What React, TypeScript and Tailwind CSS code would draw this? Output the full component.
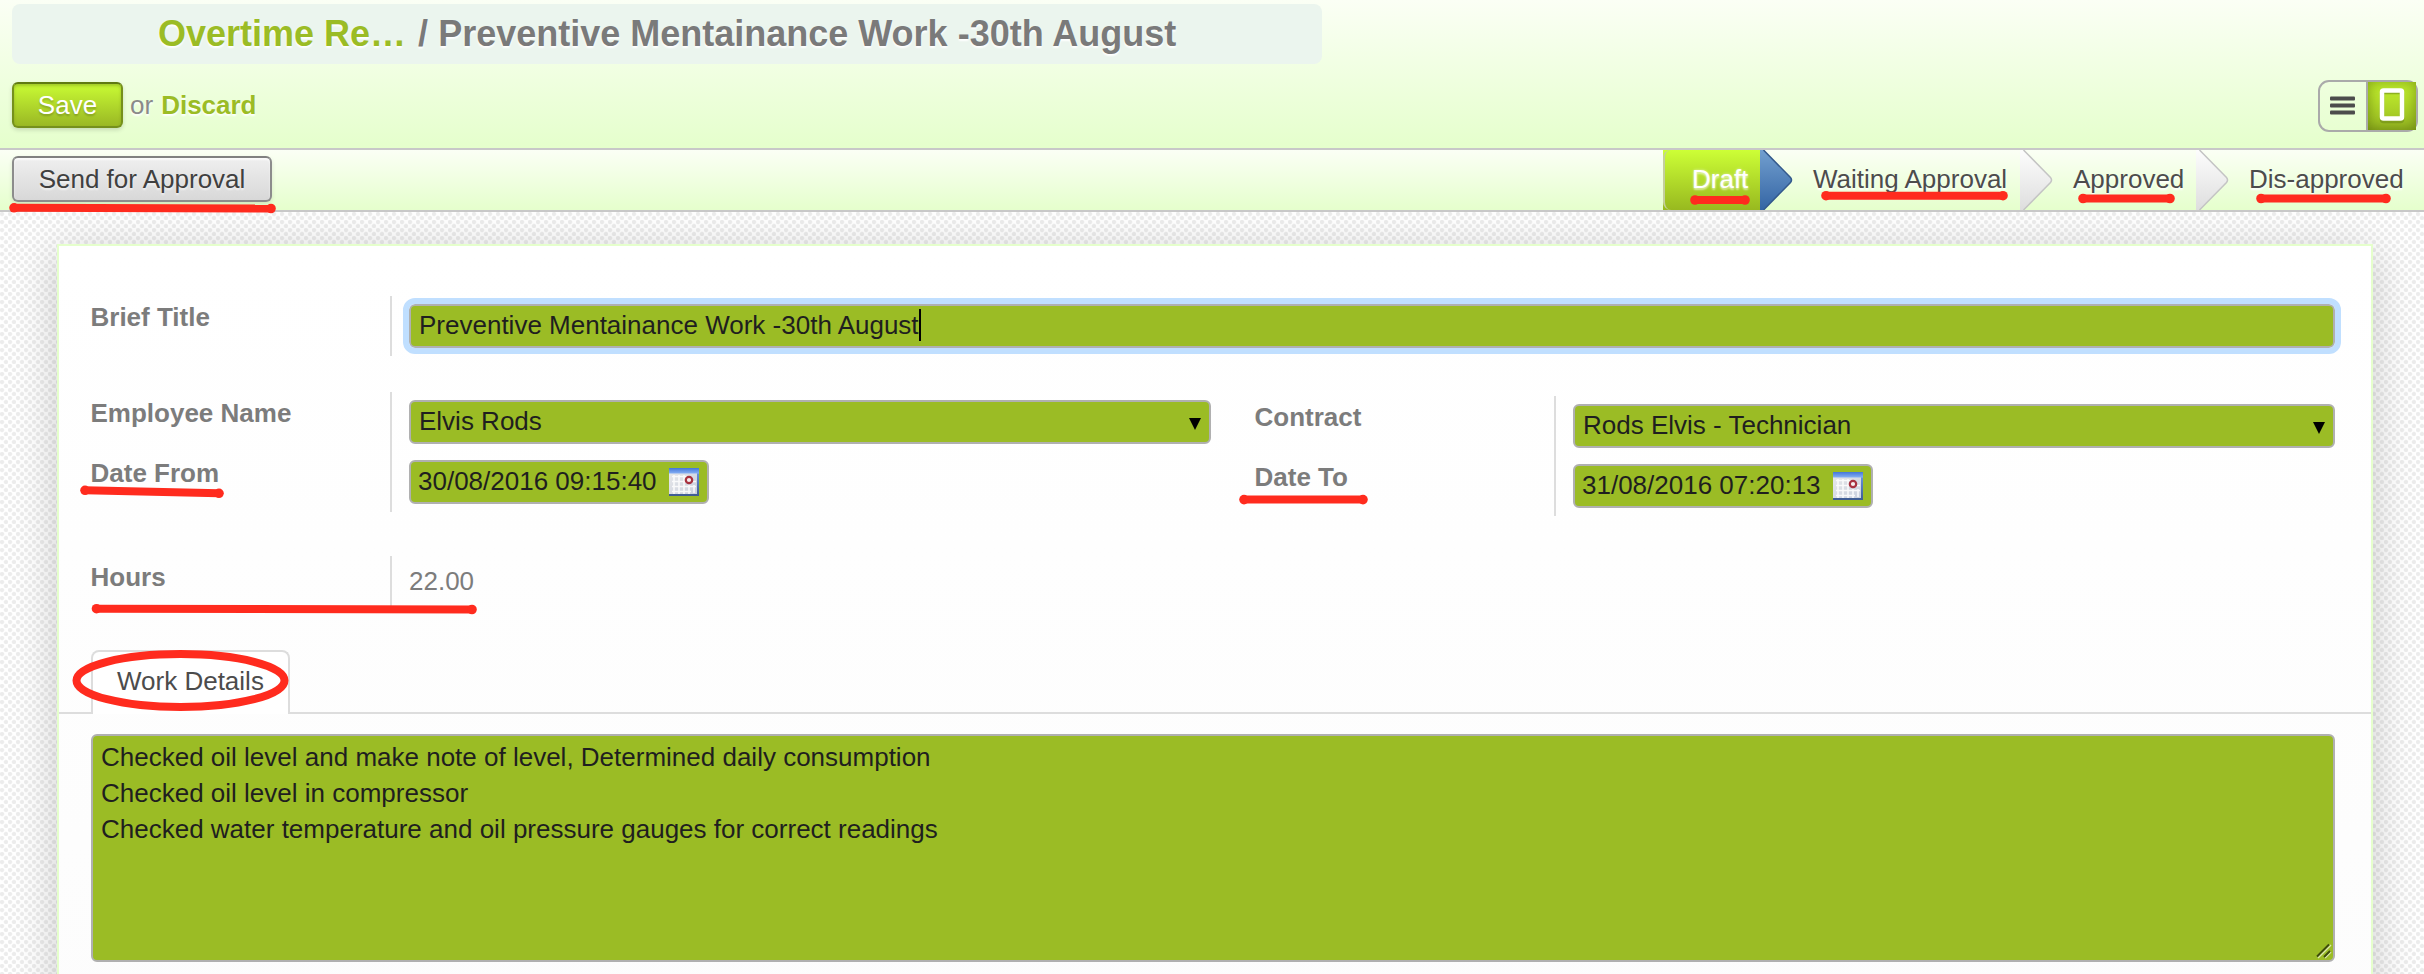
import type { ReactNode } from "react";

const INPUT =
  "flex h-11 items-center rounded-[6px] border-2 border-[#b0b0b0] bg-[#9bbc25] text-[#1f1f1f]";

function Stage({ label, active, last, className }: { label: string; active?: boolean; last?: boolean; className: string }) {
  return (
    <div className="flex h-[60px]">
      <div
        className={
          "flex items-center whitespace-nowrap pb-[2px] text-[26px] " +
          (active
            ? "rounded-none bg-linear-to-b from-[#cdff36] to-[#98b91f] text-white [text-shadow:0_2px_2px_rgba(255,255,255,0.5),0_0_3px_rgba(255,255,255,0.6)] "
            : "text-[#4c4c4c] [text-shadow:0_2px_2px_#fff] ") +
          className
        }
      >
        {label}
      </div>
      {!last && (
        <svg width="33" height="60" viewBox="0 0 33 60" className="shrink-0">
          <defs>
            <linearGradient id={active ? "arrowBlue" : "arrowGray"} x1="0" y1="0" x2="0" y2="1">
              <stop offset="0" stopColor={active ? "#729fcf" : "#fdfdfd"} />
              <stop offset="1" stopColor={active ? "#3465a4" : "#dedede"} />
            </linearGradient>
          </defs>
          <path
            d="M0 0H3.500L30.500 27.500Q32.500 30 30.500 32.500L3.500 60H0Z"
            fill={active ? "url(#arrowBlue)" : "url(#arrowGray)"}
          />
          <path
            d="M3.500 0L30.500 27.500Q32.500 30 30.500 32.500L3.500 60"
            fill="none"
            stroke={active ? "#34598c" : "#c4c4c4"}
            strokeWidth="1.500"
          />
        </svg>
      )}
    </div>
  );
}

function Group({ labels, height, children }: { labels: string[]; height: string; children: ReactNode }) {
  return (
    <div className={"flex " + height}>
      <div className="flex w-[299px] shrink-0 flex-col">
        {labels.map((l) => (
          <div key={l} className="-ml-[0.5px] h-[60px] pt-[3px] text-[26px] leading-9 font-bold text-[#7c7c7c]">
            {l}
          </div>
        ))}
      </div>
      <div className="w-[2px] shrink-0 bg-[#dddddd]" />
      <div className="flex min-w-0 grow flex-col gap-4 pt-2 pl-[17px]">{children}</div>
    </div>
  );
}

function Select({ value }: { value: string }) {
  return (
    <div className={INPUT + " justify-between pr-2 pl-2"}>
      <span className="pb-[2px]">{value}</span>
      <svg width="12" height="12" viewBox="0 0 12 12" className="mt-1">
        <path d="M0 0H12L6 12Z" fill="#000" />
      </svg>
    </div>
  );
}

function CalendarIcon() {
  return (
    <svg width="30" height="28" viewBox="0 0 30 28">
      <defs>
        <linearGradient id="calHead" x1="0" y1="0" x2="0" y2="1">
          <stop offset="0" stopColor="#4476d8" />
          <stop offset="1" stopColor="#86b0f5" />
        </linearGradient>
        <linearGradient id="calEdge" x1="0" y1="0" x2="0" y2="1">
          <stop offset="0" stopColor="#6f9bea" />
          <stop offset="1" stopColor="#3f5c92" />
        </linearGradient>
        <linearGradient id="calPage" x1="0" y1="0" x2="1" y2="1">
          <stop offset="0" stopColor="#e9e9ea" />
          <stop offset="1" stopColor="#c9d0de" />
        </linearGradient>
      </defs>
      <rect width="30" height="28" fill="url(#calEdge)" />
      <rect x="0" y="0" width="28" height="26" fill="url(#calPage)" />
      <rect width="30" height="5.500" fill="url(#calHead)" />
      <path d="M3 8.500H18M3 13.500H27M3 18.500H27M3 23.500H22M5 7V26M10 7V26M15 7V26M20 17V26M25 17V25" stroke="#fff" strokeWidth="1.600" opacity=".85" />
      <circle cx="20" cy="12" r="3.200" fill="#f6eeee" stroke="#a83240" strokeWidth="2.200" />
    </svg>
  );
}

function DateField({ value }: { value: string }) {
  return (
    <div className={INPUT + " w-[300px] justify-between pr-2 pl-[7px]"}>
      <span className="pb-[2px]">{value}</span>
      <CalendarIcon />
    </div>
  );
}

function Mark({ x1, y1, x2, y2 }: { x1: number; y1: number; x2: number; y2: number }) {
  return (
    <g>
      <line x1={x1 + 5} y1={y1} x2={x2 - 5} y2={y2} stroke="#ff2b1e" strokeWidth="8" />
      <circle cx={x1 + 5} cy={y1} r="4.800" />
      <circle cx={x2 - 5} cy={y2} r="4.800" />
    </g>
  );
}

function Annotations() {
  return (
    <svg className="pointer-events-none absolute top-0 left-0 z-20" width="2424" height="974" fill="#ff2b1e">
      <Mark x1={9} y1={207.800} x2={276} y2={208.500} />
      <Mark x1={1690} y1={200} x2={1750} y2={200} />
      <Mark x1={1821} y1={195.700} x2={2008} y2={195.700} />
      <Mark x1={2078} y1={198.500} x2={2175} y2={198.500} />
      <Mark x1={2256} y1={198.500} x2={2391} y2={198.500} />
      <Mark x1={80} y1={490.300} x2={224} y2={493.300} />
      <Mark x1={1239} y1={499.600} x2={1368} y2={499.600} />
      <Mark x1={91.500} y1={608.700} x2={477} y2={609.500} />
      <ellipse cx="180.500" cy="680.500" rx="104" ry="26.500" fill="none" stroke="#ff2b1e" strokeWidth="8" />
    </svg>
  );
}

export default function App() {
  return (
    <div className="relative flex h-[974px] w-[2424px] flex-col overflow-hidden bg-white font-['Liberation_Sans',Arial,sans-serif] text-[26px] leading-9">
      <header className="z-10 flex h-[150px] shrink-0 flex-col border-b-2 border-[#c8c8c8] bg-linear-to-b from-[#fbfff5] to-[#e5ffcc] pt-1">
        <h1 className="ml-3 h-[60px] w-[1310px] rounded-[8px] bg-[#ebf5ee] pl-[146px] text-[36px] leading-[59px] font-bold whitespace-nowrap text-[#7a7a7a] [text-shadow:0_2px_2px_#fff]">
          <span className="mr-[2px] text-[#9bbc25]">Overtime Re…</span>
          <span> / </span>
          <span>Preventive Mentainance Work -30th August</span>
        </h1>
        <div className="flex items-start justify-between pr-[6px] pl-3">
          <div className="mt-[18px] flex items-center">
            <button className="h-[46px] w-[111px] rounded-[6px] border-2 border-[#75901c] border-t-[#607a12] bg-linear-to-b from-[#c9fb34] to-[#9ab824] pb-px text-white shadow-[0_2px_4px_rgba(0,0,0,0.15),inset_0_2px_3px_rgba(90,110,20,0.35)] [text-shadow:0_2px_2px_rgba(0,0,0,0.2)]">
              Save
            </button>
            <span className="ml-[7px] text-[#8a8a8a] [text-shadow:0_2px_2px_#fff]">or</span>
            <span className="ml-2 font-bold text-[#9bbc25] [text-shadow:0_2px_2px_#fff]">Discard</span>
          </div>
          <div className="mt-4 flex h-[52px] w-[100px] rounded-[11px] border-2 border-[#aaaaaa]">
            <div className="flex w-12 items-center justify-center border-r-2 border-[#aaaaaa]">
              <svg width="26" height="20" viewBox="0 0 26 20" fill="#4c4c4c">
                <rect x="0" y="0.500" width="25" height="4" rx="1" />
                <rect x="0" y="7.500" width="25" height="4" rx="1" />
                <rect x="0" y="14.500" width="25" height="4" rx="1" />
              </svg>
            </div>
            <div className="flex w-12 items-center justify-center bg-linear-to-b from-[#c6f52f] to-[#98b922] shadow-[inset_0_0_14px_rgba(70,90,0,0.55)]">
              <svg width="30" height="36" viewBox="0 0 30 36" fill="none" className="-ml-px">
                <rect x="5" y="4" width="20" height="29" rx="1.500" stroke="#6c8618" strokeWidth="4.500" opacity=".55" />
                <rect x="5" y="2.500" width="20" height="28" rx="1.500" stroke="#fff" strokeWidth="4.500" />
              </svg>
            </div>
          </div>
        </div>
      </header>

      <div className="z-10 flex h-[62px] shrink-0 justify-between border-b-2 border-[#c8c8c8] bg-linear-to-b from-[#fbfff5] to-[#e5ffcc]">
        <button className="mt-[6px] ml-3 h-[46px] w-[260px] rounded-[6px] border-2 border-[#8c8c8c] border-t-[#808080] bg-linear-to-b from-[#efefef] to-[#d8d8d8] pb-px text-[#404040] shadow-[0_2px_4px_rgba(0,0,0,0.1),inset_0_2px_2px_rgba(255,255,255,0.7)] [text-shadow:0_2px_2px_rgba(255,255,255,0.6)]">
          Send for Approval
        </button>
        <div className="flex">
          <div className="relative flex">
            <Stage label="Draft" active className="w-[97px] pl-[29px]" />
            <div className="absolute inset-y-0 left-0 w-[8px] rounded-l-[8px] border-l-2 border-[#c4cf9c]" />
          </div>
          <Stage label="Waiting Approval" className="w-[227px] pl-[20px]" />
          <Stage label="Approved" className="w-[143px] pl-[20px]" />
          <Stage label="Dis-approved" last className="w-[195px] pl-[20px]" />
        </div>
      </div>

      <main className="flex min-h-0 grow bg-white bg-[radial-gradient(circle_at_2px_2px,#ececec_1.500px,transparent_2.800px),radial-gradient(circle_at_6px_6px,#ececec_1.500px,transparent_2.800px)] bg-[length:8px_8px] pt-8 pl-[57px]">
        <section className="flex h-[900px] w-[2316px] shrink-0 flex-col border-2 border-[#e5ffcc] bg-linear-to-b from-white to-[#fcfcfc] shadow-[0_8px_40px_rgba(0,0,0,0.2)]">
          <div className="flex flex-col pt-[50px] pr-9 pl-8">
            <Group labels={["Brief Title"]} height="h-[60px]">
              <div className={INPUT + " pl-2 outline-[6.5px] outline-[#c0dfff]"}>
                <span className="pb-[2px]">Preventive Mentainance Work -30th August</span>
                <span className="mb-[2px] h-8 w-[2px] bg-black" />
              </div>
            </Group>
            <div className="mt-9 flex gap-11">
              <div className="w-[1120px]">
                <Group labels={["Employee Name", "Date From"]} height="h-[120px]">
                  <Select value="Elvis Rods" />
                  <DateField value="30/08/2016 09:15:40" />
                </Group>
              </div>
              <div className="mt-1 grow">
                <Group labels={["Contract", "Date To"]} height="h-[120px]">
                  <Select value="Rods Elvis - Technician" />
                  <DateField value="31/08/2016 07:20:13" />
                </Group>
              </div>
            </div>
            <div className="mt-10">
              <Group labels={["Hours"]} height="h-[50px]">
                <span className="-mt-px text-[#7c7c7c]">22.00</span>
              </Group>
            </div>
          </div>

          <div className="mt-11 flex h-16 shrink-0">
            <div className="w-8 border-b-2 border-[#dddddd]" />
            <div className="w-[199px] rounded-t-[8px] border-2 border-b-0 border-[#dddddd] bg-white pt-[11px] pl-6 text-[#4c4c4c]">
              Work Details
            </div>
            <div className="grow border-b-2 border-[#dddddd]" />
          </div>

          <div className="relative mt-5 mr-9 ml-8 h-[228px] shrink-0 rounded-[6px] border-2 border-[#b0b0b0] bg-[#9bbc25] px-2 pt-[3px] text-[#1f1f1f]">
            <p>Checked oil level and make note of level, Determined daily consumption</p>
            <p>Checked oil level in compressor</p>
            <p>Checked water temperature and oil pressure gauges for correct readings</p>
            <svg className="absolute right-[1px] bottom-[1px]" width="16" height="16" viewBox="0 0 16 16">
              <path d="M2 15L15 2M9 15L15 9" stroke="#dbe8ab" strokeWidth="1.500" />
              <path d="M1 13.500L13 1.500M8 14L14 8" stroke="#3c4a0c" strokeWidth="1.800" />
            </svg>
          </div>
        </section>
      </main>

      <Annotations />
    </div>
  );
}
